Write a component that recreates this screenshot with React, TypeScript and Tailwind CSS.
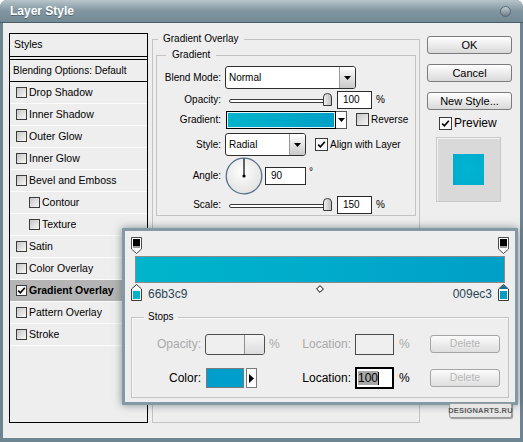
import React from 'react';

type StyleItem = { label: string; sub?: boolean; checked?: boolean; active?: boolean };

const styleItems: StyleItem[] = [
  { label: 'Drop Shadow' },
  { label: 'Inner Shadow' },
  { label: 'Outer Glow' },
  { label: 'Inner Glow' },
  { label: 'Bevel and Emboss' },
  { label: 'Contour', sub: true },
  { label: 'Texture', sub: true },
  { label: 'Satin' },
  { label: 'Color Overlay' },
  { label: 'Gradient Overlay', checked: true, active: true },
  { label: 'Pattern Overlay' },
  { label: 'Stroke' },
];

const Check = ({ checked = false, size = 11 }: { checked?: boolean; size?: number }) => (
  <span
    className={`inline-flex shrink-0 items-center justify-center border border-[#3c3c3c] ${
      checked ? 'bg-[#f7f7f7]' : 'bg-linear-to-br from-[#c6c6c6] to-[#f8f8f8]'
    } ${size === 13 ? 'h-[13px] w-[13px]' : 'h-[11px] w-[11px]'}`}
  >
    {checked && (
      <svg width="9" height="9" viewBox="0 0 9 9">
        <path d="M1.2 4.6 L3.4 6.8 L7.8 1.8" fill="none" stroke="#000" strokeWidth="1.6" />
      </svg>
    )}
  </span>
);

const DownTri = () => (
  <svg width="7" height="4" viewBox="0 0 7 4">
    <path d="M0 0 H7 L3.5 4 Z" fill="#000" />
  </svg>
);

const Select = ({ value, width }: { value: string; width: string }) => (
  <div className={`flex h-[23px] ${width} items-stretch overflow-hidden rounded-[3px] border border-[#2e2e2e] bg-white`}>
    <div className="flex flex-1 items-center pl-[3px] text-[10px]">{value}</div>
    <div className="flex w-[16px] items-center justify-center border-l border-[#9a9a9a] bg-linear-to-b from-[#ffffff] to-[#c9c9c9]">
      <DownTri />
    </div>
  </div>
);

const Slider = () => (
  <div className="relative h-[14px] w-[103px]">
    <div className="absolute left-0 right-[3px] top-[6px] h-[4px] rounded-full border border-[#3a3a3a] bg-white" />
    <svg className="absolute right-0 top-0" width="9" height="13" viewBox="0 0 9 13">
      <defs>
        <linearGradient id="thumb" x1="0" y1="0" x2="1" y2="0">
          <stop offset="0" stopColor="#f2f2f2" />
          <stop offset="1" stopColor="#bdbdbd" />
        </linearGradient>
      </defs>
      <path d="M0.5 12.5 V4 Q0.5 0.5 4.5 0.5 Q8.5 0.5 8.5 4 V12.5 Z" fill="url(#thumb)" stroke="#3a3a3a" />
    </svg>
  </div>
);

const NumBox = ({ value, w = 'w-[35px]' }: { value: string; w?: string }) => (
  <div className={`flex h-[18px] ${w} items-center border border-[#2a2a2a] bg-white pl-[5px] text-[10px]`}>{value}</div>
);

const Row = ({ label, h, children }: { label: string; h: string; children: React.ReactNode }) => (
  <div className={`flex ${h} items-center`}>
    <div className="w-[64px] text-right text-[10px]">{label}</div>
    <div className="ml-[4px] flex items-center">{children}</div>
  </div>
);

const Button = ({ label }: { label: string }) => (
  <div className="flex h-[18px] w-[85px] items-center justify-center rounded-[3px] border border-[#7b7b7b] bg-linear-to-b from-[#ffffff] to-[#d9d9d9] text-[11px] text-black">
    {label}
  </div>
);

const OpacityStop = () => (
  <svg width="11" height="17" viewBox="0 0 11 17">
    <path d="M0.5 0.5 H10.5 V12 L5.5 16.5 L0.5 12 Z" fill="#ffffff" stroke="#4a4a4a" />
    <rect x="2" y="2" width="7" height="7" fill="#000" />
    <rect x="2" y="9" width="7" height="2" fill="#9a9a9a" />
  </svg>
);

const ColorStop = ({ selected = false, color }: { selected?: boolean; color: string }) => (
  <svg width="11" height="17" viewBox="0 0 11 17">
    <path d="M5.5 0.5 L10.5 5 V16.5 H0.5 V5 Z" fill="#ffffff" stroke="#3a3a3a" />
    {selected && <path d="M5.5 1 L10 5 H1 Z" fill="#0c6f8c" />}
    <rect x="2" y="7" width="7" height="8" fill={color} />
  </svg>
);

const DeleteBtn = () => (
  <div className="flex h-[18px] w-[70px] items-center justify-center rounded-[3px] border border-[#a6a6a6] bg-linear-to-b from-[#fbfbfb] to-[#dedede] text-[10.5px] text-[#b6b6b6]">
    Delete
  </div>
);

export default function App() {
  return (
    <div className="relative h-[442px] w-[523px] overflow-hidden rounded-t-[7px] bg-[#6d8591] font-['Liberation_Sans',Arial,sans-serif] text-black">
      {/* title bar */}
      <div className="flex h-[23px] items-center justify-between border-b border-[#475d69] bg-linear-to-b from-[#b8c5cb] via-[#80959f] to-[#748a95] px-[10px]">
        <span className="text-[12px] font-bold text-white [text-shadow:0_1px_0_#51666f]">Layer Style</span>
        <span className="mr-[2px] h-[11px] w-[11px] rounded-full border border-[#55697a] bg-linear-to-b from-[#c4ccd2] to-[#6c7f8a]" />
      </div>

      {/* body */}
      <div className="mx-[3px] flex h-[415px] items-start bg-[#eeeeee] pl-[6px] pt-[10px]">
        {/* styles list */}
        <div className="flex h-[390px] w-[139px] flex-col border border-black bg-[#eeeeee] text-[10.5px]">
          <div className="flex h-[22px] items-center pl-[4px]">Styles</div>
          <div className="h-[4px] border-y border-black" />
          <div className="flex h-[22px] items-center border-b border-black pl-[3px] text-[10px]">Blending Options: Default</div>
          {styleItems.map((item) => (
            <div
              key={item.label}
              className={`flex h-[22px] items-center gap-[2px] border-b border-[#fbfbfb] ${item.sub ? 'pl-[19px]' : 'pl-[6px]'} ${
                item.active ? 'bg-[#b4b4b4] font-bold' : ''
              }`}
            >
              <Check checked={item.checked} />
              <span>{item.label}</span>
            </div>
          ))}
        </div>

        {/* gradient overlay group */}
        <fieldset className="ml-[4px] h-[390px] w-[268px] border border-[#c3c3c3]">
          <legend className="ml-[5px] px-[5px] text-[10px] leading-[12px]">Gradient Overlay</legend>
          <fieldset className="mx-[3px] mt-[4px] border border-[#c3c3c3] pb-[1px] pt-[5px]">
            <legend className="ml-[9px] px-[6px] text-[10px] leading-[12px]">Gradient</legend>
            <Row label="Blend Mode:" h="h-[23px]">
              <Select value="Normal" width="w-[131px]" />
            </Row>
            <Row label="Opacity:" h="h-[21px]">
              <div className="ml-[4px]">
                <Slider />
              </div>
              <div className="ml-[5px]">
                <NumBox value="100" />
              </div>
              <span className="ml-[4px] text-[10px]">%</span>
            </Row>
            <Row label="Gradient:" h="h-[19px]">
              <div className="ml-[1px] flex h-[18px]">
                <div className="w-[110px] border border-black bg-linear-to-r from-[#00b4cb] to-[#009fc7] shadow-[inset_0_0_0_1px_#dff4f8]" />
                <div className="flex w-[11px] items-center justify-center border border-l-0 border-[#555] bg-white">
                  <DownTri />
                </div>
              </div>
              <div className="ml-[9px] flex items-center gap-[2px] text-[10px]">
                <Check size={13} />
                <span>Reverse</span>
              </div>
            </Row>
            <div className="h-[4px]" />
            <Row label="Style:" h="h-[23px]">
              <Select value="Radial" width="w-[81px]" />
              <div className="ml-[9px] flex items-center gap-[2px] text-[10px]">
                <Check checked size={13} />
                <span>Align with Layer</span>
              </div>
            </Row>
            <Row label="Angle:" h="h-[39px]">
              <svg width="38" height="38" viewBox="0 0 38 38">
                <defs>
                  <radialGradient id="dial" cx="0.45" cy="0.4" r="0.6">
                    <stop offset="0" stopColor="#ffffff" />
                    <stop offset="1" stopColor="#e2e2e2" />
                  </radialGradient>
                </defs>
                <circle cx="19" cy="19" r="17.8" fill="url(#dial)" stroke="#58728c" strokeWidth="1.3" />
                <line x1="19" y1="19" x2="19" y2="1.5" stroke="#000" strokeWidth="1.2" />
                <circle cx="19" cy="19" r="1.6" fill="#000" />
              </svg>
              <div className="ml-[2px]">
                <NumBox value="90" w="w-[41px]" />
              </div>
              <span className="mb-[8px] ml-[3px] text-[10px]">°</span>
            </Row>
            <Row label="Scale:" h="h-[19px]">
              <div className="ml-[4px]">
                <Slider />
              </div>
              <div className="ml-[5px]">
                <NumBox value="150" />
              </div>
              <span className="ml-[4px] text-[10px]">%</span>
            </Row>
          </fieldset>
        </fieldset>

        {/* right column */}
        <div className="ml-[7px] flex w-[85px] flex-col pt-[3px]">
          <Button label="OK" />
          <div className="h-[10px]" />
          <Button label="Cancel" />
          <div className="h-[10px]" />
          <Button label="New Style..." />
          <div className="ml-[12px] mt-[6px] flex h-[14px] items-center gap-[2px] text-[12px]">
            <Check checked size={13} />
            <span>Preview</span>
          </div>
          <div className="ml-[9px] mt-[7px] flex h-[65px] w-[65px] items-center justify-center border border-[#c8c8c8] bg-[#d9d9d9] shadow-[inset_1px_1px_0_#f4f4f4]">
            <div className="h-[31px] w-[31px] bg-[radial-gradient(circle,#00b6d2,#00abcc)]" />
          </div>
        </div>
      </div>

      {/* gradient editor popup */}
      <div className="absolute left-[122px] top-[228px] flex h-[177px] w-[396px] flex-col border-[3px] border-[#8399a5] bg-[#eeeeee] px-[6px] pt-[6px] shadow-[0_0_8px_rgba(40,60,70,0.55)]">
        <div className="flex h-[17px] justify-between">
          <OpacityStop />
          <OpacityStop />
        </div>
        <div className="mx-[4px] mt-[2px] h-[27px] border border-[#8a8a8a] bg-linear-to-r from-[#00b5cb] via-[#00abcb] to-[#009fc7]" />
        <div className="relative mt-[1px] flex h-[17px] items-end justify-between">
          <div className="flex items-end gap-[6px]">
            <ColorStop color="#00b3c9" />
            <span className="mb-[1px] text-[12px] leading-[12px] text-[#2a4656]">66b3c9</span>
          </div>
          <svg className="absolute left-[185px] top-[1px]" width="8" height="8" viewBox="0 0 8 8">
            <path d="M4 0.6 L7.4 4 L4 7.4 L0.6 4 Z" fill="#fff" stroke="#000" />
          </svg>
          <div className="flex items-end gap-[6px]">
            <span className="mb-[1px] text-[12px] leading-[12px] text-[#2a4656]">009ec3</span>
            <ColorStop selected color="#009ec3" />
          </div>
        </div>

        <fieldset className="mt-[10px] border border-[#c3c3c3] pb-[8px] pt-[10px] shadow-[inset_1px_1px_0_#fafafa]">
          <legend className="ml-[12px] px-[4px] text-[10px] leading-[12px]">Stops</legend>
          <div className="flex h-[22px] items-center text-[12px] text-[#a9a9a9]">
            <div className="w-[69px] text-right">Opacity:</div>
            <div className="ml-[4px] flex h-[21px] w-[60px] overflow-hidden rounded-[3px] border border-[#4e4e4e] bg-[#efefef]">
              <div className="flex-1" />
              <div className="w-[20px] border-l border-[#8e8e8e] bg-linear-to-b from-[#f6f6f6] to-[#dcdcdc]" />
            </div>
            <div className="w-[16px] pl-[4px]">%</div>
            <div className="w-[70px] text-right">Location:</div>
            <div className="ml-[4px] h-[21px] w-[39px] border border-[#4a4a4a] bg-[#efefef]" />
            <div className="w-[36px] pl-[5px]">%</div>
            <DeleteBtn />
          </div>
          <div className="mt-[12px] flex h-[22px] items-center text-[12px]">
            <div className="w-[69px] text-right">Color:</div>
            <div className="ml-[5px] flex w-[59px] items-center">
              <div className="h-[20px] w-[38px] border border-[#7a7a7a] bg-[#009fcb]" />
              <div className="ml-[2px] flex h-[20px] w-[11px] items-center justify-center border border-[#7a7a7a] bg-white">
                <svg width="5" height="9" viewBox="0 0 5 9">
                  <path d="M0 0 L5 4.5 L0 9 Z" fill="#000" />
                </svg>
              </div>
            </div>
            <div className="w-[16px] pl-[4px]" />
            <div className="w-[70px] text-right">Location:</div>
            <div className="ml-[4px] flex h-[22px] w-[39px] items-center border-2 border-black bg-white pl-[1px]">
              <span className="bg-[#a8a8a8] leading-[14px]">100</span>
              <span className="h-[13px] w-px bg-black" />
            </div>
            <div className="w-[36px] pl-[5px]">%</div>
            <DeleteBtn />
          </div>
        </fieldset>
      </div>

      {/* watermark */}
      <div className="absolute left-[449px] top-[403px] flex h-[15px] w-[63px] items-center justify-center rounded-[2px] border border-[#9c9c9c] bg-[#e6e6e6] font-['Liberation_Sans',sans-serif] text-[7.5px] font-bold tracking-[0.2px] text-[#5a5a5a] shadow-[1px_1px_1px_rgba(0,0,0,0.35)]">
        DESIGNARTS.RU
      </div>
    </div>
  );
}
